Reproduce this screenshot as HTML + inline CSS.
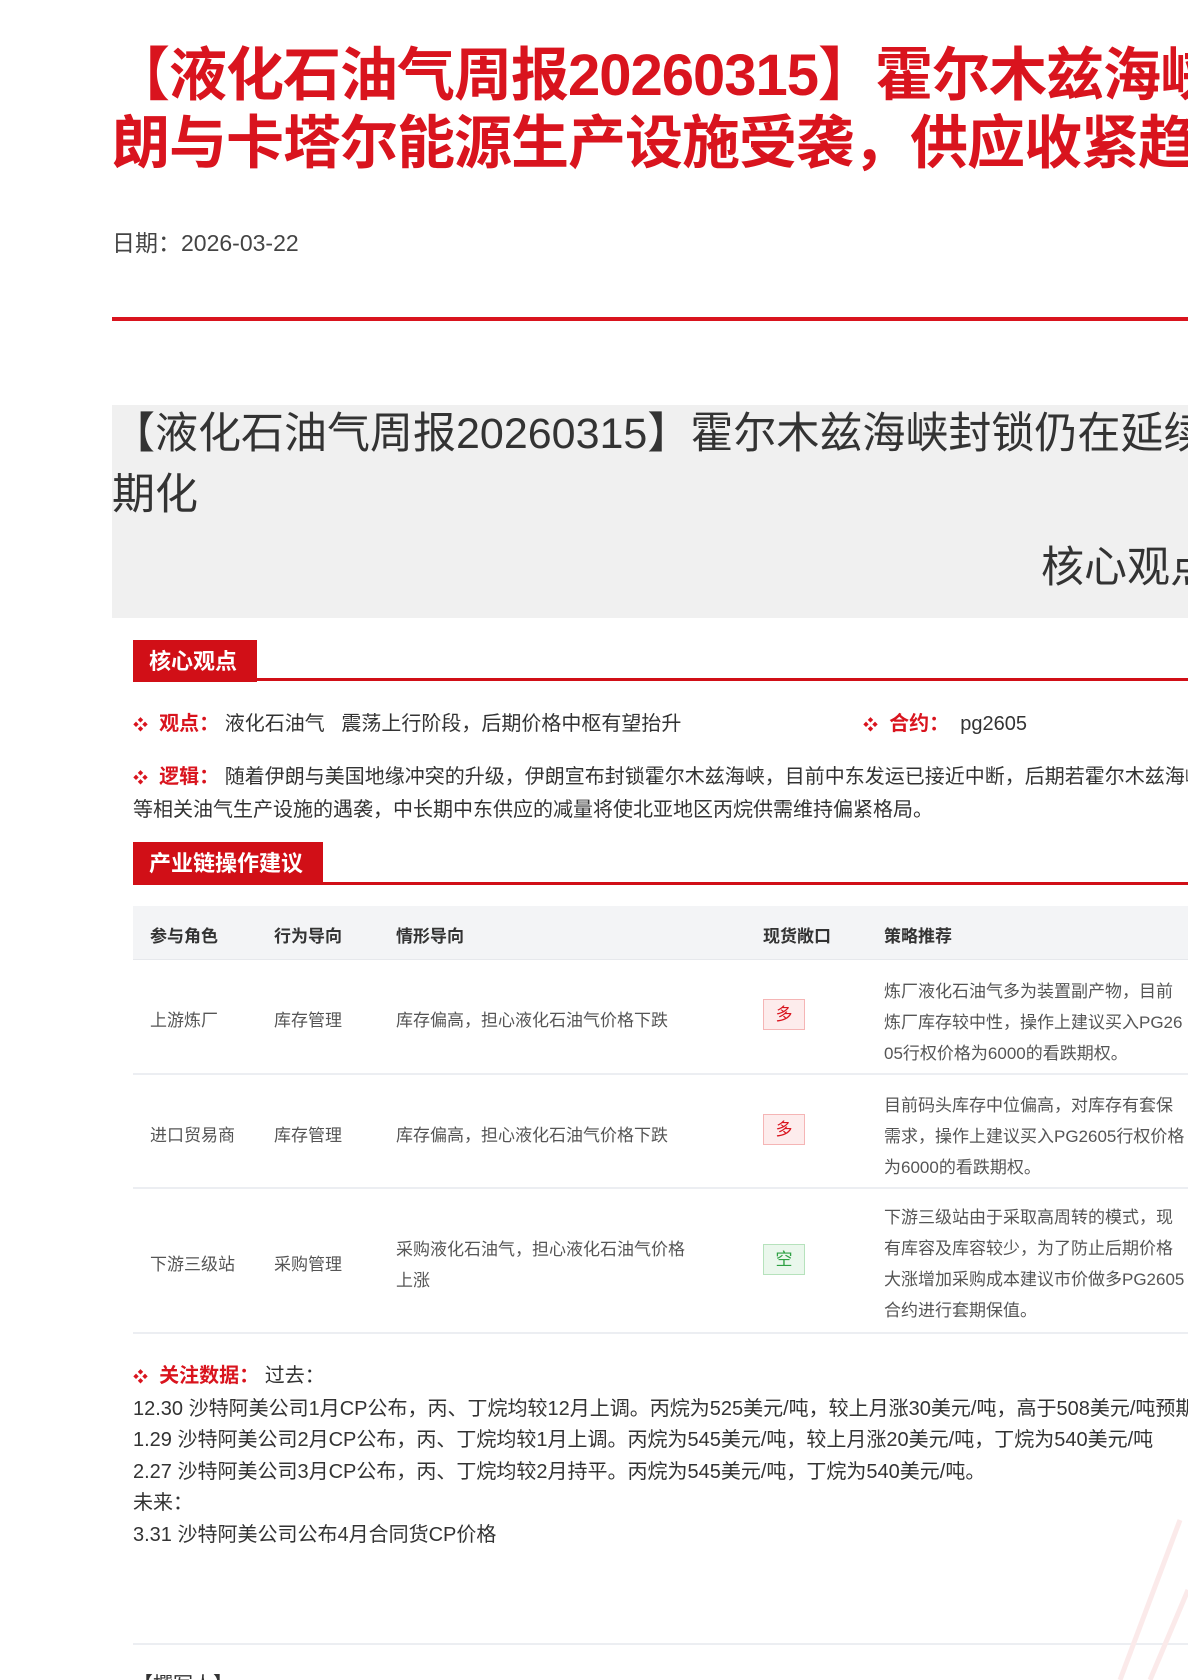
<!DOCTYPE html>
<html><head><meta charset="utf-8"><style>
html,body{margin:0;padding:0;width:1188px;height:1680px;overflow:hidden;background:#fff;}
body{position:relative;font-family:"Liberation Sans","Noto Sans CJK SC",sans-serif;color:#333;}
.a{position:absolute;white-space:nowrap;}
.wrap{position:absolute;left:0;top:0;width:1188px;height:1680px;overflow:hidden;}
.title{left:112px;top:42px;font-size:58px;line-height:68px;font-weight:bold;color:#d9141e;letter-spacing:-1px;}
.date{left:112px;top:224px;font-size:23px;color:#444;}
.rl{left:112px;top:317px;width:1076px;height:4px;background:#d9141e;}
.gbox{left:112px;top:405px;width:1076px;height:213px;background:#f0f0f0;}
.gt{left:112px;top:404px;font-size:43px;line-height:61px;color:#333;}
.tag{background:#d10f17;color:#fff;font-weight:bold;font-size:22px;padding:0 20px 0 16px;height:42px;line-height:44px;}
.ul{height:3px;background:#d10f17;left:133px;width:1055px;}
.p{font-size:20px;color:#333;}
.r{color:#d9141e;font-weight:bold;}
.star{color:#d9141e;font-size:15px;}
.hd{left:133px;top:906px;width:1055px;height:53px;background:#f3f4f6;border-bottom:1px solid #e6e8ec;}
.th{font-size:17px;font-weight:bold;color:#333;}
.td{font-size:17px;color:#555;}
.line{left:133px;width:1055px;height:2px;background:#eceef2;}
.badge{width:40px;height:29px;line-height:29px;text-align:center;font-size:17px;}
.duo{background:#fdecec;border:1px solid #f5b5b5;color:#d9141e;}
.kong{background:#eaf7ec;border:1px solid #b6e2bc;color:#2ea043;}
</style></head><body><div class="wrap">
<div class="a title">【液化石油气周报20260315】霍尔木兹海峡封锁仍在延续，伊<br>朗与卡塔尔能源生产设施受袭，供应收紧趋于长期化</div>
<div class="a date">日期：2026-03-22</div>
<div class="a rl"></div>
<div class="a gbox"></div>
<div class="a gt">【液化石油气周报20260315】霍尔木兹海峡封锁仍在延续，伊朗与卡塔尔<br>期化</div>
<div class="a gt" style="left:1041px;top:538px;">核心观点</div>

<div class="a tag" style="left:133px;top:640px;">核心观点</div>
<div class="a ul" style="top:678px;"></div>
<div class="a p" style="left:133px;top:707px;"><span class="star">❖</span>&nbsp;&nbsp;<span class="r">观点：</span>&nbsp;液化石油气&nbsp;&nbsp;&nbsp;震荡上行阶段，后期价格中枢有望抬升</div>
<div class="a p" style="left:863px;top:707px;"><span class="star">❖</span>&nbsp;&nbsp;<span class="r">合约：</span>&nbsp;&nbsp;pg2605</div>
<div class="a p" style="left:133px;top:760px;"><span class="star">❖</span>&nbsp;&nbsp;<span class="r">逻辑：</span>&nbsp;随着伊朗与美国地缘冲突的升级，伊朗宣布封锁霍尔木兹海峡，目前中东发运已接近中断，后期若霍尔木兹海峡</div>
<div class="a p" style="left:133px;top:793px;">等相关油气生产设施的遇袭，中长期中东供应的减量将使北亚地区丙烷供需维持偏紧格局。</div>

<div class="a tag" style="left:133px;top:842px;">产业链操作建议</div>
<div class="a ul" style="top:882px;"></div>
<div class="a hd"></div>
<div class="a th" style="left:150px;top:922px;">参与角色</div>
<div class="a th" style="left:274px;top:922px;">行为导向</div>
<div class="a th" style="left:396px;top:922px;">情形导向</div>
<div class="a th" style="left:763px;top:922px;">现货敞口</div>
<div class="a th" style="left:884px;top:922px;">策略推荐</div>

<div class="a td" style="left:150px;top:1006px;">上游炼厂</div>
<div class="a td" style="left:274px;top:1006px;">库存管理</div>
<div class="a td" style="left:396px;top:1006px;">库存偏高，担心液化石油气价格下跌</div>
<div class="a badge duo" style="left:763px;top:999px;">多</div>
<div class="a td" style="left:884px;top:976px;line-height:31px;">炼厂液化石油气多为装置副产物，目前<br>炼厂库存较中性，操作上建议买入PG26<br>05行权价格为6000的看跌期权。</div>
<div class="a line" style="top:1073px;"></div>

<div class="a td" style="left:150px;top:1121px;">进口贸易商</div>
<div class="a td" style="left:274px;top:1121px;">库存管理</div>
<div class="a td" style="left:396px;top:1121px;">库存偏高，担心液化石油气价格下跌</div>
<div class="a badge duo" style="left:763px;top:1114px;">多</div>
<div class="a td" style="left:884px;top:1090px;line-height:31px;">目前码头库存中位偏高，对库存有套保<br>需求，操作上建议买入PG2605行权价格<br>为6000的看跌期权。</div>
<div class="a line" style="top:1187px;"></div>

<div class="a td" style="left:150px;top:1250px;">下游三级站</div>
<div class="a td" style="left:274px;top:1250px;">采购管理</div>
<div class="a td" style="left:396px;top:1234px;line-height:31px;">采购液化石油气，担心液化石油气价格<br>上涨</div>
<div class="a badge kong" style="left:763px;top:1244px;">空</div>
<div class="a td" style="left:884px;top:1202px;line-height:31px;">下游三级站由于采取高周转的模式，现<br>有库容及库容较少，为了防止后期价格<br>大涨增加采购成本建议市价做多PG2605<br>合约进行套期保值。</div>
<div class="a line" style="top:1332px;"></div>

<div class="a p" style="left:133px;top:1361px;line-height:31.6px;"><span class="star">❖</span>&nbsp;&nbsp;<span class="r">关注数据：</span>&nbsp;过去：<br>12.30 沙特阿美公司1月CP公布，丙、丁烷均较12月上调。丙烷为525美元/吨，较上月涨30美元/吨，高于508美元/吨预期<br>1.29 沙特阿美公司2月CP公布，丙、丁烷均较1月上调。丙烷为545美元/吨，较上月涨20美元/吨，丁烷为540美元/吨<br>2.27 沙特阿美公司3月CP公布，丙、丁烷均较2月持平。丙烷为545美元/吨，丁烷为540美元/吨。<br>未来：<br>3.31 沙特阿美公司公布4月合同货CP价格</div>
<div class="a line" style="top:1643px;"></div>
<div class="a p" style="left:133px;top:1668px;">【撰写人】</div>
<svg class="a" style="left:1000px;top:1500px;" width="188" height="180"><path d="M180 20 L120 180 M188 90 L150 180" stroke="#fbeaea" stroke-width="5" fill="none"/></svg>
</div></body></html>
